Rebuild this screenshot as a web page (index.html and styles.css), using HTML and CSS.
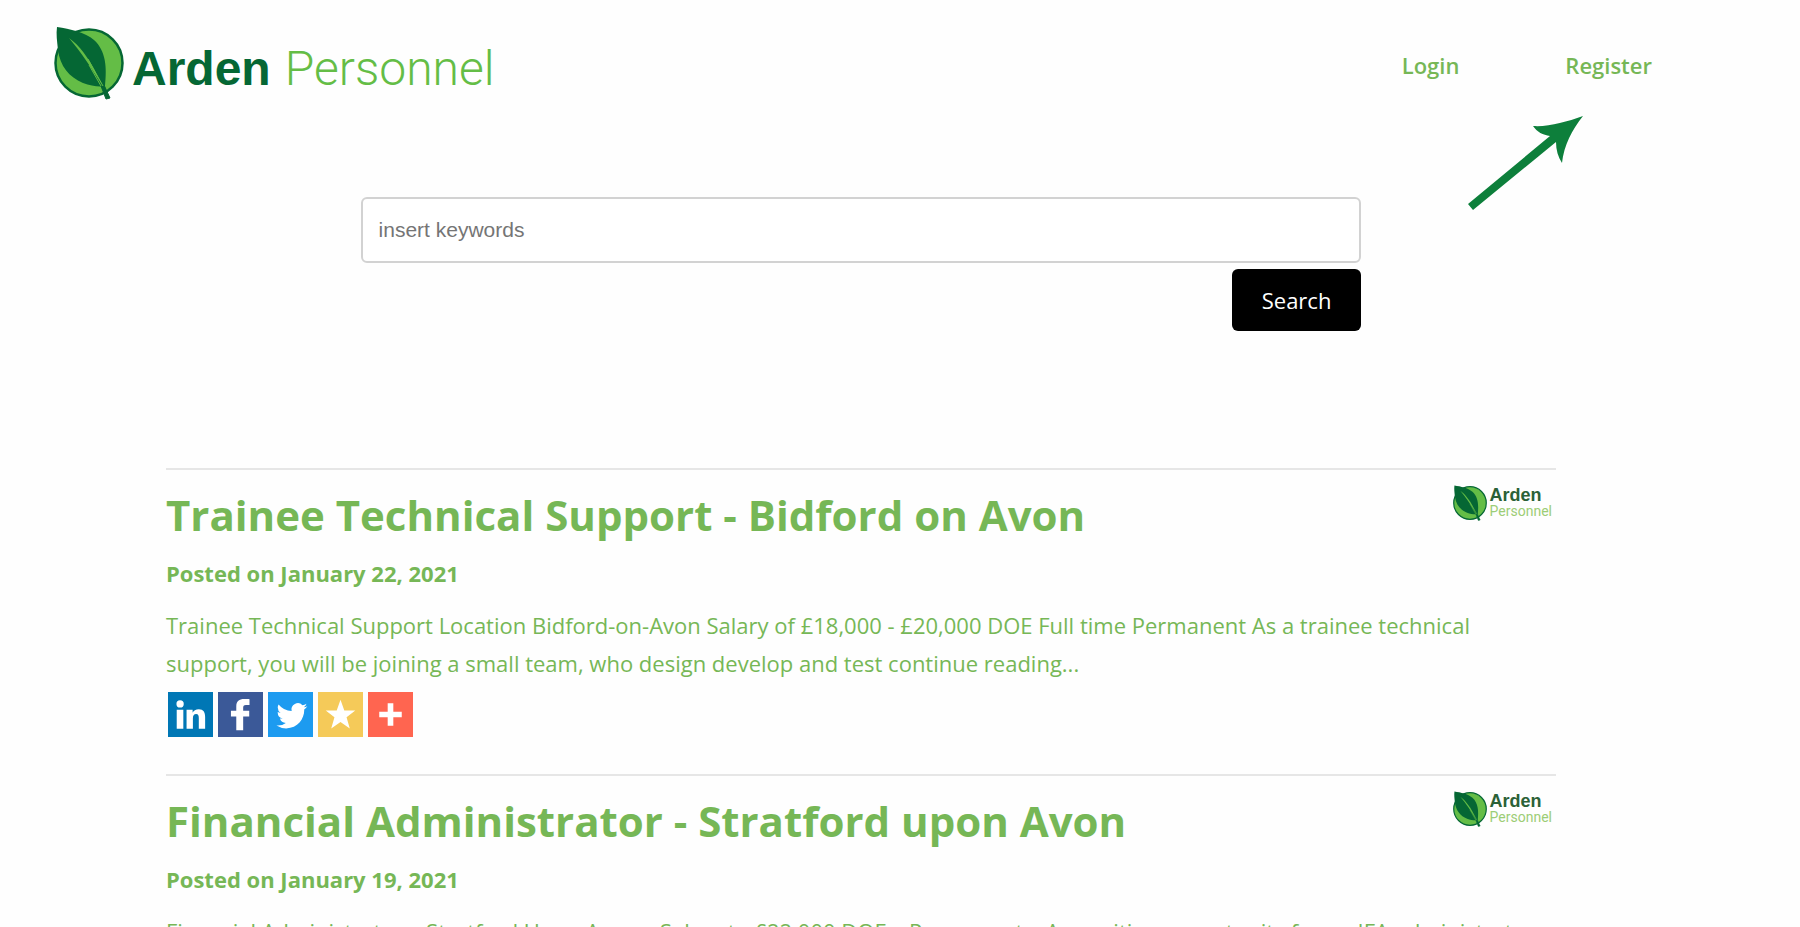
FILE: index.html
```html
<!DOCTYPE html>
<html lang="en">

<head>
<meta charset="utf-8" />
<meta name="viewport" content="width=device-width, initial-scale=1" />
<title>Arden Personnel - Jobs</title>
<link rel="stylesheet" href="styles.css">
</head>

<body>
  <!-- leaf and share icons, used below -->
  <svg class="sprite" aria-hidden="true">
    <symbol id="leaf" viewBox="0 0 70 74">
      <circle cx="35" cy="37" r="33.5" fill="#64bd46" stroke="#056734" stroke-width="2.5" />
      <path d="M3 1 C16 3 31 6 40 14 C52 25 53 41 51 60 C45 61 37 60 29 57 C15 51 6 40 4 24 C3 15 2 8 3 1 Z" fill="#056734" />
      <path d="M50 59 L56 72 L52 73 L47 60 Z" fill="#056734" stroke="#056734" />
      <path d="M15 12 C25 19 35 32 43 49 L48 59 C38 43 27 26 15 12 Z" fill="#64bd46" />
      <path d="M34 33 L49 60 M35 39 L47 60" stroke="#64bd46" stroke-width="1" fill="none" />
    </symbol>
    <symbol id="linkedin" viewBox="0 0 32 32">
      <path d="M6.2 12.6h4.700v13.500H6.200zM8.600 5.900a2.600 2.600 0 1 1 0 5.200 2.600 2.600 0 0 1 0-5.200M13.200 12.600h4.300v1.900h.1c.6-1.100 2.100-2.300 4.300-2.300 3.300 0 4.500 2.100 4.500 5.500v8.400h-4.500v-7.400c0-1.800-.3-3-1.900-3s-2.300 1.200-2.300 2.900v7.500h-4.500z" fill="#fff" />
    </symbol>
    <symbol id="facebook" viewBox="0 0 32 32">
      <path d="M22.400 5.100v4.100h-2.500c-1.700 0-2 .9-2 2v2.200h4.300v4h-4.300v9.800h-4.900v-9.800H9.200v-4H13v-3.200c0-3.600 2.100-5.200 5.600-5.200 1.700 0 3.100.1 3.800.1z" fill="#fff" />
    </symbol>
    <symbol id="twitter" viewBox="0 0 32 32">
      <path d="M27.996 10.116c-.81.36-1.680.602-2.592.71a4.526 4.526 0 0 0 1.984-2.496 9.037 9.037 0 0 1-2.866 1.095 4.513 4.513 0 0 0-7.690 4.116 12.810 12.810 0 0 1-9.300-4.715 4.490 4.490 0 0 0-.612 2.270 4.510 4.510 0 0 0 2.008 3.755 4.495 4.495 0 0 1-2.044-.564v.057a4.515 4.515 0 0 0 3.620 4.425 4.520 4.520 0 0 1-2.038.077 4.517 4.517 0 0 0 4.217 3.134 9.055 9.055 0 0 1-5.604 1.930A9.180 9.180 0 0 1 6 23.850a12.773 12.773 0 0 0 6.918 2.027c8.300 0 12.840-6.876 12.840-12.840 0-.195-.005-.390-.014-.583a9.172 9.172 0 0 0 2.252-2.336" fill="#fff" />
    </symbol>
    <symbol id="star" viewBox="0 0 32 32">
      <path d="M16 5.500l2.700 7.600h7.800l-6.200 4.900 2.300 8L16 21.300 9.400 26l2.300-8-6.200-4.900h7.800z" fill="#fff" />
    </symbol>
    <symbol id="plus" viewBox="0 0 32 32">
      <path d="M14 8h4v6h6v4h-6v6h-4v-6H8v-4h6z" fill="#fff" />
    </symbol>
  </svg>

  <header class="header">
    <a class="logo" href="#">
      <svg class="logo-leaf" aria-hidden="true"><use href="#leaf" /></svg>
      <span class="logo-arden">Arden</span>
      <span class="logo-personnel">Personnel</span>
    </a>
    <nav class="nav">
      <a href="#">Login</a>
      <a href="#">Register
        <svg class="arrow" viewBox="0 0 115 94" aria-hidden="true">
          <path d="M0 88 L82 20 C75 19 69 16 65 10 C81 11 98 6 115 0 C104 14 96 29 94 47 C90 41 88 34 88 26 L5 94 Z" fill="#0d7f3b" />
        </svg>
      </a>
    </nav>
  </header>

  <main class="content">
    <form class="search">
      <input class="search-input" type="text" placeholder="insert keywords" aria-label="insert keywords">
      <button class="search-button" type="button">Search</button>
    </form>

    <article class="job">
      <div class="job-head">
        <h2><a href="#">Trainee Technical Support - Bidford on Avon</a></h2>
        <div class="job-logo">
          <svg class="job-leaf" aria-hidden="true"><use href="#leaf" /></svg>
          <div class="job-name"><b>Arden</b><span>Personnel</span></div>
        </div>
      </div>
      <h3>Posted on January 22, 2021</h3>
      <p>Trainee Technical Support Location Bidford-on-Avon Salary of £18,000 - £20,000 DOE Full time Permanent As a trainee technical support, you will be joining a small team, who design develop and test <a href="#">continue reading...</a></p>
      <div class="share">
        <a class="linkedin" href="#" aria-label="LinkedIn"><svg><use href="#linkedin" /></svg></a>
        <a class="facebook" href="#" aria-label="Facebook"><svg><use href="#facebook" /></svg></a>
        <a class="twitter" href="#" aria-label="Twitter"><svg><use href="#twitter" /></svg></a>
        <a class="star" href="#" aria-label="Favourites"><svg><use href="#star" /></svg></a>
        <a class="plus" href="#" aria-label="More"><svg><use href="#plus" /></svg></a>
      </div>
    </article>

    <article class="job">
      <div class="job-head">
        <h2><a href="#">Financial Administrator - Stratford upon Avon</a></h2>
        <div class="job-logo">
          <svg class="job-leaf" aria-hidden="true"><use href="#leaf" /></svg>
          <div class="job-name"><b>Arden</b><span>Personnel</span></div>
        </div>
      </div>
      <h3>Posted on January 19, 2021</h3>
      <p>Financial Administrator – Stratford Upon Avon – Salary to £22,000 DOE – Permanent – An exciting opportunity for an IFA administrator</p>
    </article>
  </main>
</body>

</html>
```
FILE: styles.css
```css
* {
  box-sizing: border-box;
}

html {
  overflow: hidden;
}

body {
  margin: 0;
  height: 100vh;
  overflow: hidden;
  background-color: #fefefe;
  color: #76b756;
  font-family: "Open Sans", sans-serif;
  font-size: 22px;
  line-height: 38px;
}

a {
  color: inherit;
  text-decoration: none;
}

.sprite {
  display: none;
}

/* header */
.header {
  display: flex;
  justify-content: space-between;
  align-items: center;
  height: 130px;
  padding: 0 148px 0 54px;
}

.logo {
  display: flex;
  align-items: center;
  margin-bottom: 4px;
  line-height: 74px;
  white-space: nowrap;
}

.logo-leaf {
  width: 70px;
  height: 74px;
}

.logo-arden {
  margin-left: 8px;
  padding-top: 12px;
  font-family: "Liberation Sans", sans-serif;
  font-size: 48px;
  font-weight: bold;
  color: #056734;
}

.logo-personnel {
  margin-left: 14px;
  padding-top: 12px;
  font-family: Roboto, sans-serif;
  font-size: 48px;
  font-weight: 300;
  color: #64bd46;
}

.nav {
  display: flex;
  gap: 106px;
  font-weight: 600;
}

.nav a {
  position: relative;
}

/* points at the register link */
.arrow {
  position: absolute;
  top: 70px;
  right: 69px;
  width: 115px;
  height: 94px;
}

/* everything under the header */
.content {
  width: 1390px;
  max-width: 90%;
  margin-left: 166px;
}

.search {
  display: flex;
  flex-direction: column;
  align-items: flex-end;
  gap: 6px;
  width: 72%;
  margin: 67px auto 137px;
}

.search-input {
  width: 100%;
  height: 66px;
  padding: 0 16px;
  border: 2px solid #d2d2d2;
  border-radius: 6px;
  background-color: #fff;
  font-family: "Liberation Sans", Arial, sans-serif;
  font-size: 21px;
}

.search-input::placeholder {
  color: #757575;
}

.search-button {
  padding: 12px 30px;
  border: 0;
  border-radius: 6px;
  background-color: #000;
  color: #fff;
  font-family: inherit;
  font-size: 22px;
  line-height: 38px;
}

/* job list */
.job {
  border-top: 2px solid #e6e6e6;
  padding: 15px 0 36px;
}

.job-head {
  display: flex;
  justify-content: space-between;
  align-items: flex-start;
}

h2,
h3,
p {
  margin: 0;
}

h2 {
  font-size: 42px;
  line-height: 60px;
}

h3 {
  margin: 9px 0 14px;
  font-size: 22px;
  line-height: 38px;
}

.job-logo {
  display: flex;
  align-items: center;
  gap: 3px;
  padding-right: 4px;
}

.job-leaf {
  width: 34px;
  height: 36px;
}

.job-name {
  display: flex;
  flex-direction: column;
  font-family: "Liberation Sans", sans-serif;
  font-size: 18px;
  line-height: 16px;
  color: #2b6137;
}

.job-name span {
  font-family: Roboto, sans-serif;
  font-size: 14px;
  color: #9ccd76;
}

.share {
  display: flex;
  gap: 5px;
  margin-top: 9px;
  padding: 1px 2px;
}

.share a,
.share svg {
  display: block;
  width: 45px;
  height: 45px;
}

.linkedin {
  background-color: #0077b5;
}

.facebook {
  background-color: #3b5998;
}

.twitter {
  background-color: #1d9bf0;
}

.star {
  background-color: #f5ca59;
}

.plus {
  background-color: #ff6550;
}
```
